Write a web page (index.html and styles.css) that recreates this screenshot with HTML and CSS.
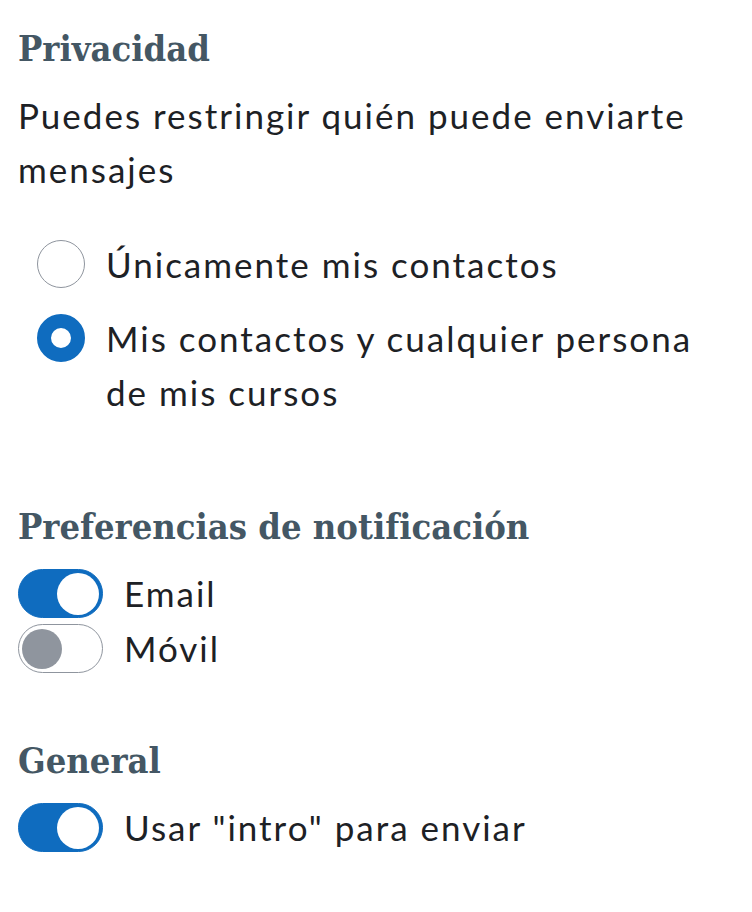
FILE: index.html
```html
<!DOCTYPE html>
<html lang="es">
<head>
<meta charset="utf-8">
<title>Preferencias</title>
<link rel="stylesheet" href="styles.css">
</head>
<body>
<main class="prefs">
  <section class="section section-privacy">
    <h2 class="heading">Privacidad</h2>
    <p class="desc">Puedes restringir quién puede enviarte mensajes</p>
    <div class="radios">
      <label class="radio-item">
        <span class="radio"></span>
        <span class="radio-label">Únicamente mis contactos</span>
      </label>
      <label class="radio-item">
        <span class="radio radio-checked"></span>
        <span class="radio-label">Mis contactos y cualquier persona de mis cursos</span>
      </label>
    </div>
  </section>
  <section class="section section-notif">
    <h2 class="heading">Preferencias de notificación</h2>
    <div class="toggles">
      <div class="toggle-row">
        <span class="toggle toggle-on"><span class="knob"></span></span>
        <span class="toggle-label">Email</span>
      </div>
      <div class="toggle-row">
        <span class="toggle toggle-off"><span class="knob"></span></span>
        <span class="toggle-label">Móvil</span>
      </div>
    </div>
  </section>
  <section class="section section-general">
    <h2 class="heading">General</h2>
    <div class="toggles">
      <div class="toggle-row">
        <span class="toggle toggle-on"><span class="knob"></span></span>
        <span class="toggle-label">Usar "intro" para enviar</span>
      </div>
    </div>
  </section>
</main>
</body>
</html>
```
FILE: styles.css
```css
html, body {
  margin: 0;
  padding: 0;
  background: #ffffff;
}
body {
  font-family: Lato, "Noto Sans", sans-serif;
  font-size: 35px;
  letter-spacing: 2px;
  line-height: 54px;
  color: #1d2125;
}
.prefs {
  padding: 26px 18px 0 18px;
  width: 716px;
  box-sizing: content-box;
}
.section {
  display: flex;
  flex-direction: column;
}
.heading {
  margin: 0;
  font-family: "DejaVu Serif", "Liberation Serif", serif;
  font-stretch: condensed;
  font-weight: bold;
  font-size: 36px;
  letter-spacing: 0;
  line-height: 44px;
  color: #445764;
}
.desc {
  margin: 18px 0 0 0;
}
.radios {
  margin-top: 41px;
  padding-left: 19px;
  display: flex;
  flex-direction: column;
  gap: 20px;
}
.radio-item {
  display: flex;
  align-items: flex-start;
  gap: 21px;
}
.radio {
  flex: 0 0 auto;
  width: 48px;
  height: 48px;
  margin-top: 3px;
  box-sizing: border-box;
  border-radius: 50%;
  border: 1.5px solid #8f959e;
  background: #fff;
}
.radio-checked {
  border: 14px solid #0f6cbf;
}
.radio-label {
  flex: 1 1 auto;
}
.section-notif {
  margin-top: 85px;
}
.section-general {
  margin-top: 65px;
}
.toggles {
  margin-top: 21px;
  display: flex;
  flex-direction: column;
  gap: 6px;
}
.toggle-row {
  display: flex;
  align-items: center;
  gap: 21px;
  line-height: 49px;
}
.toggle {
  flex: 0 0 auto;
  width: 85px;
  height: 49px;
  box-sizing: border-box;
  border-radius: 25px;
  display: flex;
  align-items: center;
  padding: 0 3px;
}
.toggle-on {
  background: #0f6cbf;
  border: 1px solid #0f6cbf;
  justify-content: flex-end;
}
.toggle-on .knob {
  width: 42px;
  height: 42px;
  background: #fff;
}
.toggle-off {
  background: #fff;
  border: 1.5px solid #8f959e;
  justify-content: flex-start;
}
.toggle-off .knob {
  width: 40px;
  height: 40px;
  background: #8f959e;
}
.knob {
  border-radius: 50%;
  display: block;
}
```
